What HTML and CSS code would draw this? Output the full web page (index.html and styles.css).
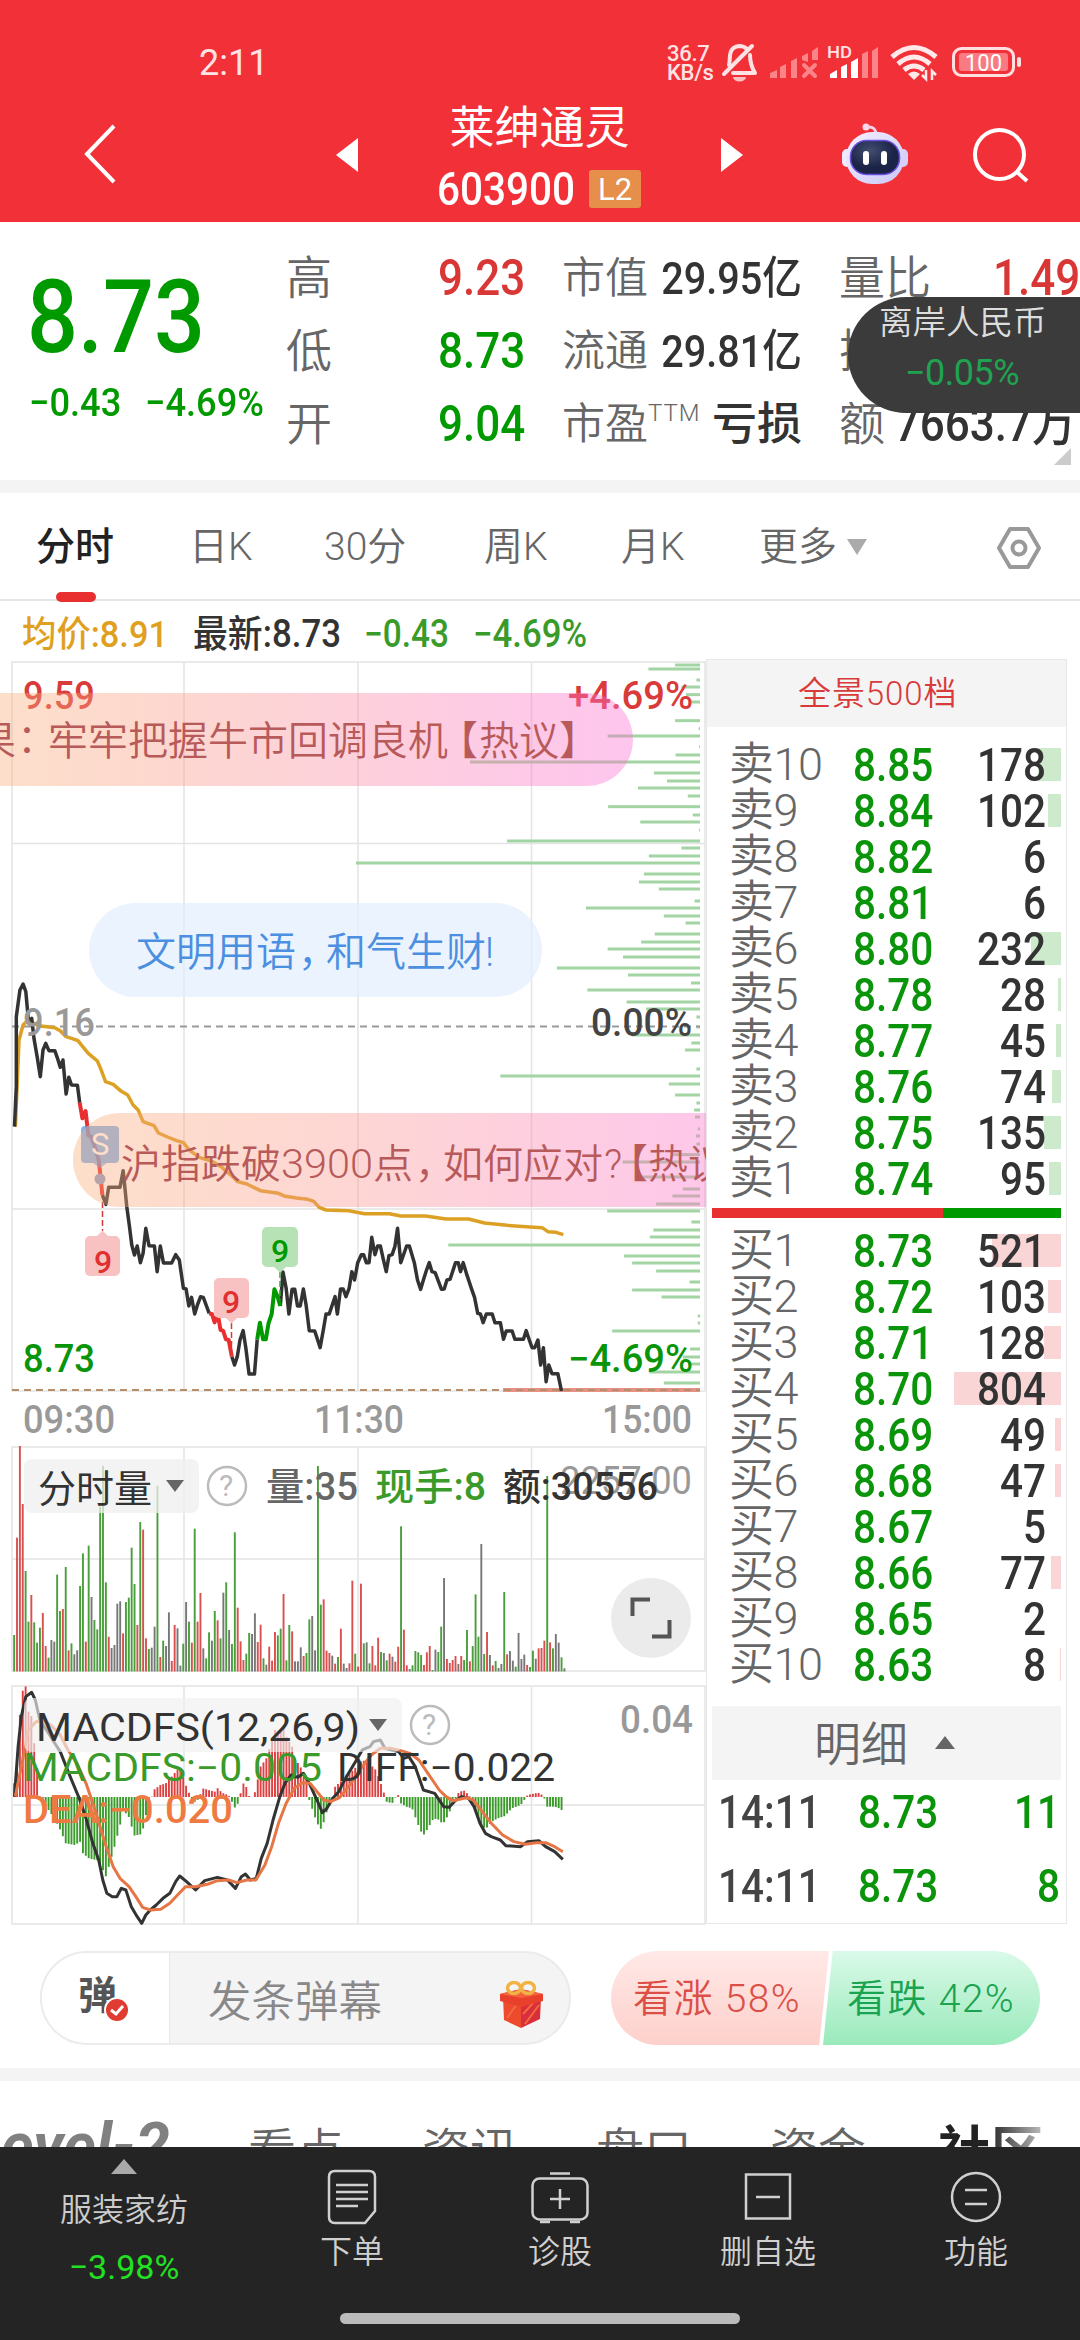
FILE: index.html
```html
<!DOCTYPE html>
<html lang="zh-CN">
<head>
    <meta charset="UTF-8">
    <meta name="viewport" content="width=device-width, initial-scale=1.0">
    <title>莱绅通灵 603900</title>
    <link rel="stylesheet" href="styles.css">
</head>
<body>
    <div class="app">
        <header class="header">
            <div class="status-bar">
                <span class="clock">2:11</span>
                <span class="net-speed">36.7<br>KB/s</span>
                <svg class="status-icons" width="362" height="50" viewBox="718 38 362 50">
                    <g fill="none" stroke="#ffe3e4" stroke-width="4" stroke-linecap="round" stroke-linejoin="round">
                        <path d="M724 74 L752 46"/>
                        <path d="M729 65 C731 58 727 48 739 46 C743 46 745 47 747 49 M750 55 C750 64 752 68 755 73 H733"/>
                    </g>
                    <path d="M733 77 h13 a6.500 4.500 0 0 1 -13 0z" fill="#ffe3e4" opacity=".8"/>
                    <g fill="#fb8489">
                        <path d="M770 78 v-5 l7 -3 v8z M780 78 v-11 l6 -3 v14z M791 78 v-17 l6 -3 v20z M802 60 v-4 l6 -3 v9z M812 60 v-9 l6 -4 v13z"/>
                        <path d="M804 65 l11 11 M815 65 l-11 11" stroke="#fb8489" stroke-width="4" stroke-linecap="round"/>
                        <path d="M862 78 v-24 l6 -3 v27z M872 78 v-27 l6 -4 v31z"/>
                    </g>
                    <path d="M830 78 v-4 l7 -4 v8z M841 78 v-11 l6 -3 v14z M851 78 v-16 l7 -4 v20z" fill="#fff"/>
                    <text x="827" y="58" class="hd" textLength="25">HD</text>
                    <g fill="none" stroke="#ffe9ea" stroke-width="5">
                        <path d="M892 57 Q914 38 936 57"/>
                        <path d="M898 64 Q914 50 930 64"/>
                        <path d="M904 70 Q914 62 924 70"/>
                    </g>
                    <path d="M908 74 q6 -5 12 0 l-6 6z" fill="#ffe9ea"/>
                    <path d="M926 70 v9 l-4 -4 M932 80 v-9 l4 4" stroke="#ffe9ea" stroke-width="2.500" fill="none"/>
                    <rect x="953.500" y="48.500" width="60" height="27" rx="8" fill="none" stroke="#ffdfe0" stroke-width="3"/>
                    <rect x="959" y="53" width="49" height="18" rx="3" fill="#f97a80"/>
                    <rect x="1017" y="57" width="4" height="10" rx="2" fill="#ffdfe0"/>
                    <text x="965" y="71" class="battery" textLength="37">100</text>
                </svg>
            </div>
            <div class="nav">
                <svg class="nav-back" width="40" height="66" viewBox="80 121 40 66"><path d="M114 126 L87 154 L114 182" fill="none" stroke="#fff" stroke-width="4"/></svg>
                <svg class="nav-prev" width="22" height="34" viewBox="0 0 22 34"><path d="M22 0 V34 L0 17z" fill="#fff"/></svg>
                <div class="nav-title">
                    <div class="stock-name">莱绅通灵</div>
                    <div class="stock-code"><span class="code">603900</span><span class="l2">L2</span></div>
                </div>
                <svg class="nav-next" width="22" height="34" viewBox="0 0 22 34"><path d="M0 0 V34 L22 17z" fill="#fff"/></svg>
                <svg class="nav-robot" width="68" height="64" viewBox="841 121 68 64">
                    <defs>
                        <linearGradient id="head" x1="0" y1="0" x2="1" y2="1"><stop offset="0" stop-color="#f6f0ff"/><stop offset="1" stop-color="#c9c8f7"/></linearGradient>
                        <radialGradient id="face" cx=".4" cy=".3"><stop offset="0" stop-color="#414e72"/><stop offset="1" stop-color="#1b2346"/></radialGradient>
                    </defs>
                    <circle cx="866" cy="127" r="3.500" fill="#fbd9e8"/>
                    <path d="M867 127 q9 -1 9 8" fill="none" stroke="#f4d2ea" stroke-width="3"/>
                    <rect x="842" y="149" width="12" height="18" rx="5" fill="#efeaff"/>
                    <rect x="896" y="149" width="12" height="18" rx="5" fill="#d6d0fa"/>
                    <rect x="846" y="132" width="58" height="52" rx="26" fill="url(#head)"/>
                    <rect x="850.500" y="140.500" width="49" height="34" rx="16" fill="url(#face)" stroke="#6a4fe0" stroke-width="1.500"/>
                    <rect x="863" y="151" width="6" height="14" rx="3" fill="#fff"/>
                    <rect x="881" y="151" width="6" height="14" rx="3" fill="#fff"/>
                </svg>
                <svg class="nav-search" width="60" height="60" viewBox="970 125 60 60"><circle cx="999.500" cy="154.500" r="24.500" fill="none" stroke="#fff" stroke-width="4"/><path d="M1017 172 L1027 181" stroke="#fff" stroke-width="4"/></svg>
            </div>
        </header>

        <section class="quote">
            <div class="price-box">
                <div class="price fit">8.73</div>
                <div class="change"><span class="fit">−0.43</span><span class="fit">−4.69%</span></div>
            </div>
            <div class="stat-col">
                <div class="stat"><span>高</span><b class="fit red">9.23</b></div>
                <div class="stat"><span>低</span><b class="fit green">8.73</b></div>
                <div class="stat"><span>开</span><b class="fit green">9.04</b></div>
            </div>
            <div class="stat-col small">
                <div class="stat"><span>市值</span><b class="fit">29.95亿</b></div>
                <div class="stat"><span>流通</span><b class="fit">29.81亿</b></div>
                <div class="stat"><span>市盈<sup>TTM</sup></span><b class="word">亏损</b></div>
            </div>
            <div class="stat-col last">
                <div class="stat"><span>量比</span><b class="fit red">1.49</b></div>
                <div class="stat"><span>换</span></div>
                <div class="stat"><span>额</span><b class="fit amount">7663.7万</b></div>
            </div>
            <div class="more-corner"></div>
            <div class="fx-toast">
                <div>离岸人民币</div>
                <div class="fx-value">−0.05%</div>
            </div>
        </section>

        <nav class="tabs">
            <div class="tab active">分时</div>
            <div class="tab">日K</div>
            <div class="tab">30分</div>
            <div class="tab">周K</div>
            <div class="tab">月K</div>
            <div class="tab">更多<i class="caret"></i></div>
            <svg width="46" height="44" viewBox="0 0 46 44"><path d="M14 3 H32 L43 22 L32 41 H14 L3 22z" fill="none" stroke="#999" stroke-width="4" stroke-linejoin="round"/><circle cx="23" cy="22" r="6.500" fill="none" stroke="#999" stroke-width="4"/></svg>
        </nav>

        <main class="main">
            <div class="charts">
                <div class="info-row">
                    <svg width="620" height="44" viewBox="0 612 620 44" class="cap">
                        <text x="22" y="647" fill="#e0a01f" textLength="146">均价:8.91</text>
                        <text x="193" y="647" fill="#333" textLength="148">最新:8.73</text>
                        <text x="364" y="647" fill="#3a9a2a" textLength="85">−0.43</text>
                        <text x="473" y="647" fill="#3a9a2a" textLength="114">−4.69%</text>
                    </svg>
                </div>

                <svg class="chart cap" width="706" height="784" viewBox="0 656 706 784">
                    <defs>
                        <linearGradient id="pill1" gradientUnits="userSpaceOnUse" x1="-60" x2="633" y1="0" y2="0"><stop offset="0" stop-color="#fab478"/><stop offset=".3" stop-color="#fa9e84"/><stop offset="1" stop-color="#fc6ed4"/></linearGradient>
                        <linearGradient id="pill3" gradientUnits="userSpaceOnUse" x1="73" x2="760" y1="0" y2="0"><stop offset="0" stop-color="#faae78"/><stop offset=".45" stop-color="#fc9696"/><stop offset="1" stop-color="#fc6ed4"/></linearGradient>
                    </defs>
                    <g class="grid">
                        <path d="M12 662 H705 V1391 H12z M184 662 V1391 M358 662 V1391 M531.500 662 V1391 M12 843.500 H705 M12 1209 H705"/>
                    </g>
                    <g id="depth"></g>
                    <path d="M12 1026.500 H700" stroke="#999" stroke-width="2" stroke-dasharray="7 5"/>
                    <path d="M503 1390 H700" stroke="#e88f88" stroke-width="4"/>
                    <path d="M12 1390 H700" stroke="#b58f6a" stroke-width="2" stroke-dasharray="7 5"/>
                    <g id="lines" transform="translate(0 960) scale(.45281 .33333)"></g>

                    <!-- sell mark and nine-turn marks -->
                    <rect x="81" y="1126" width="38" height="37" rx="4" fill="#5b9be6" fill-opacity=".75"/>
                    <path d="M93 1163 h14 l-7 5z" fill="#5b9be6" fill-opacity=".6"/>
                    <circle cx="100" cy="1179" r="5.500" fill="#8a9cc8"/>
                    <text x="91" y="1155" font-size="31" font-weight="400" fill="#fff">S</text>
                    <path d="M102.500 1202 V1231 M231.500 1323 V1356" stroke="#d03c3c" stroke-width="1.500" stroke-dasharray="6 3"/>
                    <path d="M280 1272 V1300" stroke="#4a9a4a" stroke-width="1.500" stroke-dasharray="6 3"/>
                    <path d="M90 1236 h7 l5.500 -5.500 l5.500 5.500 h7 a5 5 0 0 1 5 5 v30 a5 5 0 0 1 -5 5 h-25 a5 5 0 0 1 -5 -5 v-30 a5 5 0 0 1 5 -5z" fill="#f8c2c3"/>
                    <path d="M219 1278 h25 a5 5 0 0 1 5 5 v30 a5 5 0 0 1 -5 5 h-7 l-5.500 5.500 l-5.500 -5.500 h-7 a5 5 0 0 1 -5 -5 v-30 a5 5 0 0 1 5 -5z" fill="#f8c2c3"/>
                    <path d="M267 1227 h26 a5 5 0 0 1 5 5 v30 a5 5 0 0 1 -5 5 h-7 l-6 5.500 l-6 -5.500 h-7 a5 5 0 0 1 -5 -5 v-30 a5 5 0 0 1 5 -5z" fill="#b6e2b6"/>
                    <text x="94" y="1273" font-size="32" fill="#e03030">9</text>
                    <text x="222" y="1313" font-size="32" fill="#e03030">9</text>
                    <text x="271" y="1262" font-size="32" fill="#090">9</text>

                    <text x="23" y="709" fill="#d93a3a" textLength="72">9.59</text>
                    <text x="568" y="709" fill="#d93a3a" textLength="125">+4.69%</text>
                    <text x="23" y="1036" fill="#999" textLength="72">9.16</text>
                    <text x="591" y="1036" fill="#444" textLength="101">0.00%</text>
                    <text x="23" y="1372" fill="#0a940a" textLength="72">8.73</text>
                    <text x="568" y="1372" fill="#0a940a" textLength="125">−4.69%</text>
                    <text x="23" y="1433" fill="#999" textLength="92">09:30</text>
                    <text x="314" y="1433" fill="#999" textLength="90">11:30</text>
                    <text x="602" y="1433" fill="#999" textLength="90">15:00</text>

                    <!-- danmaku -->
                    <rect x="-90" y="693" width="723" height="93" rx="46.500" fill="url(#pill1)" fill-opacity=".4"/>
                    <rect x="89" y="903" width="453" height="94" rx="47" fill="#e3eefd" fill-opacity=".7"/>
                    <path d="M706 1113 H120 a47 47 0 0 0 0 94 H706z" fill="url(#pill3)" fill-opacity=".4"/>
                    <g class="danmaku" fill="#b85a5a">
                        <text x="-24" y="755">果</text><text x="7" y="755" class="mid">：</text>
                        <text x="48" y="755">牢牢把握牛市回调良机</text><text x="438" y="755">【</text><text x="479" y="755">热议</text><text x="559" y="755">】</text>
                        <text x="121" y="1178">沪指跌破</text><text x="281" y="1178" textLength="92">3900</text><text x="373" y="1178">点</text><text x="415" y="1178">，</text><text x="443" y="1178">如何应对</text><text x="604" y="1178">?</text><text x="608" y="1178">【</text><text x="648" y="1178">热议</text>
                    </g>
                    <g class="danmaku" fill="#4a8fe0">
                        <text x="136" y="966">文明用语</text><text x="298" y="966">，</text><text x="326" y="966">和气生财</text><text x="485" y="966">!</text>
                    </g>
                </svg>

                <svg class="chart cap" width="706" height="240" viewBox="0 1440 706 240">
                    <path class="grid" d="M12 1447 H705 V1671 H12z M184 1447 V1671 M358 1447 V1671 M531.500 1447 V1671 M12 1559 H705"/>
                    <g id="volume"></g>
                    <rect x="24" y="1459" width="175" height="54" rx="8" fill="#efefef" fill-opacity=".75"/>
                    <text x="38" y="1502" font-size="39" font-weight="400" fill="#333">分时量</text>
                    <path d="M166 1480 h18 l-9 12z" fill="#666"/>
                    <circle cx="227" cy="1486" r="19" fill="none" stroke="#bbb" stroke-width="2.500"/>
                    <text x="219" y="1496" font-size="30" font-weight="400" fill="#bbb">?</text>
                    <text x="560" y="1494" fill="#999" font-weight="400" textLength="132">2257.00</text>
                    <text x="266" y="1500" fill="#666" textLength="92">量:35</text>
                    <text x="375" y="1500" fill="#3a9a2a" textLength="111">现手:8</text>
                    <text x="503" y="1500" fill="#333" textLength="155">额:30556</text>
                    <circle cx="651" cy="1618" r="40" fill="#ebebeb"/>
                    <path d="M632.500 1616 V1599.500 H650 M669.500 1620 V1636.500 H652" fill="none" stroke="#555" stroke-width="4"/>
                </svg>

                <svg class="chart cap" width="706" height="250" viewBox="0 1680 706 250">
                    <path class="grid" d="M12 1686 H705 V1924 H12z M184 1686 V1924 M358 1686 V1924 M531.500 1686 V1924 M12 1805 H705"/>
                    <g id="macd"></g>
                    <g id="macd-lines" transform="translate(0 1430) scale(.45281 .33333)"></g>
                    <rect x="24" y="1698" width="378" height="54" rx="8" fill="#efefef" fill-opacity=".65"/>
                    <text x="36" y="1741" fill="#333" font-weight="400" textLength="324">MACDFS(12,26,9)</text>
                    <path d="M369 1719 h18 l-9 12z" fill="#666"/>
                    <circle cx="430" cy="1725" r="19" fill="none" stroke="#bbb" stroke-width="2.500"/>
                    <text x="422" y="1735" font-size="30" font-weight="400" fill="#bbb">?</text>
                    <text x="620" y="1733" fill="#999" textLength="73">0.04</text>
                    <text x="23" y="1781" fill="#3a9a2a" font-weight="400" textLength="299">MACDFS:−0.005</text>
                    <text x="337" y="1781" fill="#333" font-weight="400" textLength="218">DIFF:−0.022</text>
                    <text x="23" y="1823" fill="#ee7a42" textLength="210">DEA:−0.020</text>
                </svg>
            </div>

            <aside class="book">
                <div class="book-head">全景500档</div>
                <div class="levels" id="asks"></div>
                <div class="ratio"><i></i></div>
                <div class="levels bids" id="bids"></div>
                <div class="detail-head">明细<i class="caret up"></i></div>
                <div class="deal"><span class="fit">14:11</span><b class="fit">8.73</b><em class="fit">11</em></div>
                <div class="deal"><span class="fit">14:11</span><b class="fit">8.73</b><em class="fit">8</em></div>
            </aside>
        </main>

        <section class="interact">
            <div class="danmu-input">
                <div class="danmu-switch">弹
                    <svg width="26" height="26" viewBox="0 0 26 26"><circle cx="13" cy="13" r="12" fill="#e03c31" stroke="#fff" stroke-width="2"/><path d="M7 13 l5 4 l7 -8" fill="none" stroke="#fff" stroke-width="3"/></svg>
                </div>
                <div class="danmu-text">发条弹幕</div>
                <svg class="gift" width="46" height="50" viewBox="0 0 46 50">
                    <path d="M4 17 L22 23 L22 48 L5 40z" fill="#ee4a2e"/>
                    <path d="M22 23 L42 17 L41 39 L22 48z" fill="#d92f3c"/>
                    <path d="M26 44 L40 25 M24 34 L36 21 M8 38 L18 24" stroke="#f4683c" stroke-width="2"/>
                    <path d="M1 14 L22 9 L44 14 V21 L22 27 L1 21z" fill="#e9402c"/>
                    <path d="M1 14 L22 9 L44 14 L22 18z" fill="#f4613c"/>
                    <g fill="none" stroke="#f2b345" stroke-width="3.500"><ellipse cx="15" cy="8" rx="6.500" ry="5.500"/><ellipse cx="29" cy="8" rx="6.500" ry="5.500"/></g>
                </svg>
            </div>
            <div class="vote">
                <div class="vote-up">看涨 58%</div>
                <div class="vote-down">看跌 42%</div>
            </div>
        </section>

        <nav class="sub-tabs">
            <div class="level2">Level-2</div>
            <div>看点</div>
            <div>资讯</div>
            <div>盘口</div>
            <div>资金</div>
            <div class="current">社区</div>
        </nav>

        <footer class="footer">
            <div class="sector">
                <i class="caret up"></i>
                <div>服装家纺</div>
                <div class="sector-value">−3.98%</div>
            </div>
            <div class="action">
                <svg width="60" height="60" viewBox="0 0 60 60"><path d="M13 4 H47 Q53 4 53 10 V44 L43 56 H13 Q7 56 7 50 V10 Q7 4 13 4z"/><path d="M14 18 H46 M14 25 H46 M14 32 H46 M14 39 H36"/></svg>
                <span>下单</span>
            </div>
            <div class="action">
                <svg width="60" height="60" viewBox="0 0 60 60"><rect x="2.500" y="11.500" width="55" height="41" rx="7"/><path d="M20 6.500 H40 M30 22 V42 M20 32 H40 M10 55 H20 M40 55 H50"/></svg>
                <span>诊股</span>
            </div>
            <div class="action">
                <svg width="60" height="60" viewBox="0 0 60 60"><rect x="8" y="7.500" width="44" height="44"/><path d="M18 30 H42"/></svg>
                <span>删自选</span>
            </div>
            <div class="action">
                <svg width="60" height="60" viewBox="0 0 60 60"><circle cx="30" cy="30" r="24"/><path d="M19 23 H41 M19 37 H41"/></svg>
                <span>功能</span>
            </div>
            <div class="home-bar"></div>
        </footer>
    </div>
    <script src="script.js"></script>
</body>
</html>
```

FILE: styles.css
```css
* {
    box-sizing: border-box;
}
body {
    margin: 0;
    background: #fff;
    font-family: Roboto, "Noto Sans CJK SC", sans-serif;
    color: #333;
}
.app {
    width: 1080px;
    height: 2340px;
    overflow: hidden;
    position: relative;
    display: flex;
    flex-direction: column;
}
svg {
    display: block;
    flex: none;
}
b {
    font-weight: 500;
}
i, em {
    font-style: normal;
}
.fit {
    display: inline-block;
    transform: scaleX(0.88);
    transform-origin: left center;
    white-space: nowrap;
}
.red { color: #d93636; }
.green { color: #009900; }
.caret {
    display: inline-block;
    border: 10px solid transparent;
    border-top: 16px solid #aaa;
    border-bottom: 0;
}
.caret.up {
    border-top: 0;
    border-bottom: 13px solid #666;
}

/* header */
.header {
    height: 222px;
    background: #f23038;
    color: #fff;
}
.status-bar {
    height: 100px;
    padding: 38px 0 0 199px;
    display: flex;
}
.clock {
    width: 468px;
    font-size: 36px;
    line-height: 50px;
    color: #ffe3e4;
}
.net-speed {
    width: 51px;
    padding-top: 6px;
    font-size: 22px;
    line-height: 19px;
    font-weight: 500;
    letter-spacing: -0.3px;
    color: #ffe3e4;
}
.hd {
    font-size: 17px;
    font-weight: 500;
    fill: #ffe3e4;
}
.battery {
    font-size: 23px;
    fill: #fff;
}
.nav {
    height: 122px;
    display: flex;
    padding-left: 80px;
}
.nav-back {
    margin: 21px 216px 0 0;
}
.nav-prev, .nav-next {
    margin-top: 38px;
}
.nav-title {
    width: 363px;
}
.stock-name {
    font-size: 45px;
    line-height: 58px;
    text-align: center;
}
.stock-code {
    display: flex;
    align-items: center;
    padding-left: 79px;
    margin-top: 12px;
    height: 38px;
}
.code {
    width: 152px;
    font-size: 46px;
    line-height: 38px;
    font-weight: 500;
    transform: scaleX(0.88);
    transform-origin: left center;
}
.l2 {
    width: 52px;
    height: 38px;
    background: #e58f4a;
    border-radius: 3px;
    font-size: 31px;
    line-height: 39px;
    text-align: center;
}
.nav-robot {
    margin: 21px 0 0 98px;
}
.nav-search {
    margin: 25px 0 0 61px;
}

/* quote */
.quote {
    height: 271px;
    padding: 20px 0 0 30px;
    border-bottom: 13px solid #f4f4f4;
    position: relative;
    display: grid;
    grid-template-columns: 256px 239px 239px 240px;
}
.price-box {
    color: #009900;
}
.price {
    font-size: 102px;
    line-height: 102px;
    font-weight: 500;
    margin-top: 24px;
    margin-left: -3px;
}
.change {
    font-size: 39px;
    line-height: 40px;
    margin-top: 15px;
    margin-left: -1px;
    display: flex;
    gap: 18px;
    font-weight: 500;
}
.change .fit {
    transform: scaleX(0.93);
}
.change .fit:first-child {
    width: 98px;
}
.stat-col {
    line-height: 73px;
}
.stat-col.small {
    margin-left: 37px;
    margin-right: -38px;
}
.stat-col.last {
    margin-left: 75px;
    margin-right: -76px;
}
.stat {
    display: flex;
    justify-content: space-between;
    height: 73px;
    white-space: nowrap;
}
.stat span {
    font-size: 46px;
    font-weight: 350;
    color: #666;
}
.stat b {
    font-size: 50px;
    transform-origin: right center;
}
.small .stat span {
    font-size: 43px;
}
.small .stat b {
    font-size: 45px;
    margin-left: -20px;
}
.small .word {
    font-weight: 500;
}
.stat sup {
    font-size: 24px;
    line-height: 0;
    vertical-align: 18px;
    letter-spacing: 1px;
}
.last .amount {
    margin-left: -20px;
    margin-right: 4px;
}
.more-corner {
    position: absolute;
    left: 1054px;
    top: 226px;
    border-left: 17px solid transparent;
    border-bottom: 17px solid #ccc;
}
.fx-toast {
    position: absolute;
    left: 848px;
    top: 75px;
    width: 240px;
    height: 116px;
    padding-left: 31px;
    background: #3b3b3b;
    border-radius: 58px 0 0 58px;
    color: #ddd;
    font-size: 33.5px;
    line-height: 51px;
    font-weight: 350;
}
.fx-value {
    padding-left: 26px;
    color: #1fa350;
    font-size: 36px;
    font-weight: 400;
    letter-spacing: -0.5px;
}

/* period tabs */
.tabs {
    height: 108px;
    border-bottom: 2px solid #e6e6e6;
    padding-left: 36px;
    display: grid;
    grid-template-columns: 153px 135px 160px 137px 138px 237px auto;
    align-items: center;
    font-size: 39px;
    color: #666;
    font-weight: 350;
}
.tab {
    position: relative;
    line-height: 109px;
}
.tab.active {
    font-weight: 500;
    color: #222;
}
.tab.active::after {
    content: "";
    position: absolute;
    left: 20px;
    bottom: 0;
    width: 40px;
    height: 10px;
    border-radius: 5px;
    background: #e83030;
}
.tab .caret {
    margin-left: 10px;
    vertical-align: 5px;
}

/* charts */
.main {
    display: flex;
    height: 1329px;
}
.charts {
    width: 706px;
}
.info-row {
    height: 55px;
    padding-top: 11px;
}
.cap text {
    font-weight: 500;
    font-size: 38px;
}
.cap text[textLength="146"] { font-size: 36px; }
.cap text[font-size="30"] { font-size: 30px; font-weight: 400; }
.cap text[font-size="31"] { font-size: 31px; font-weight: 400; }
.cap text[font-size="32"] { font-size: 32px; }
.cap text[font-weight="400"] { font-weight: 400; }
.cap .danmaku text {
    font-size: 40px;
    font-weight: 350;
}
.cap .danmaku .mid {
    font-family: "Noto Sans CJK TC", sans-serif;
}
.grid {
    fill: none;
    stroke: #e4e4e4;
    stroke-width: 1.5;
}

/* order book */
.book {
    width: 361px;
    height: 1265px;
    margin-top: 58px;
    border: 1px solid #e8e8e8;
    padding: 0 5px;
}
.book-head {
    margin: 0 -5px;
    height: 67px;
    background: #f4f4f4;
    color: #d93a3a;
    font-size: 33px;
    line-height: 68px;
    padding-left: 91px;
    font-weight: 350;
    letter-spacing: 0.9px;
}
.levels {
    padding-top: 15px;
    height: 481px;
}
.level {
    height: 46px;
    line-height: 46px;
    font-size: 46px;
    position: relative;
    display: grid;
    grid-template-columns: 124px 96px 97px;
    padding-left: 17px;
    font-weight: 500;
    white-space: nowrap;
}
.level span {
    font-size: 45px;
    font-weight: 350;
    letter-spacing: -0.5px;
    color: #666;
}
.level b {
    color: #0a940a;
}
.level em {
    text-align: right;
    transform-origin: right center;
    position: relative;
}
.level i {
    position: absolute;
    right: 0;
    top: 6px;
    height: 33px;
    background: #cdeacd;
}
.bids .level i {
    background: #f9d5d5;
}
.ratio {
    height: 10px;
    background: #e83030;
}
.ratio i {
    display: block;
    height: 10px;
    width: 118px;
    margin-left: auto;
    background: #009900;
}
.bids {
    padding-top: 10px;
    height: 488px;
}
.detail-head {
    height: 74px;
    background: #f4f4f4;
    color: #666;
    font-size: 47px;
    line-height: 77px;
    padding-left: 102px;
    font-weight: 350;
}
.detail-head .caret {
    margin-left: 27px;
    vertical-align: 12px;
}
.deal {
    height: 74px;
    line-height: 65px;
    font-size: 46px;
    display: grid;
    grid-template-columns: 140px 100px 102px;
    padding-left: 6px;
    font-weight: 500;
    color: #0a940a;
    white-space: nowrap;
}
.deal span {
    color: #444;
}
.deal em {
    text-align: right;
    transform-origin: right center;
}

/* danmaku input and vote */
.interact {
    height: 151px;
    padding: 21px 40px 0;
    border-bottom: 13px solid #f4f4f4;
    display: flex;
    justify-content: space-between;
}
.danmu-input {
    width: 531px;
    height: 94px;
    border: 2px solid #ebebeb;
    border-radius: 47px;
    background: #f4f4f4;
    overflow: hidden;
    display: flex;
    align-items: center;
}
.danmu-switch {
    position: relative;
    width: 128px;
    height: 100%;
    padding-left: 36px;
    background: #fff;
    border-right: 1px solid #e8e8e8;
    font-size: 39px;
    font-weight: 700;
    line-height: 86px;
    color: #555;
}
.danmu-switch svg {
    position: absolute;
    left: 62px;
    top: 44px;
}
.danmu-text {
    width: 329px;
    padding-left: 38px;
    font-size: 43.5px;
    font-weight: 350;
    color: #888;
}
.gift {
    margin-top: 14px;
}
.vote {
    width: 429px;
    height: 94px;
    border-radius: 47px;
    overflow: hidden;
    display: flex;
    font-size: 39px;
    line-height: 96px;
    font-weight: 350;
    white-space: nowrap;
    letter-spacing: 1.4px;
}
.vote-up {
    width: 218px;
    padding-left: 22px;
    color: #dc4f47;
    background: linear-gradient(#ffe9e7, #fdd0cb);
    clip-path: polygon(0 0, 100% 0, 95.500% 100%, 0 100%);
}
.vote-down {
    width: 217px;
    margin-left: -6px;
    padding-left: 24px;
    color: #1aa350;
    background: linear-gradient(#dafae9, #9aeabb);
    clip-path: polygon(4.500% 0, 100% 0, 100% 100%, 0 100%);
}

/* sub tabs */
.sub-tabs {
    height: 66px;
    display: flex;
    font-size: 48px;
    line-height: 142px;
    font-weight: 350;
    color: #666;
    overflow: hidden;
}
.sub-tabs div {
    width: 174px;
    flex: none;
}
.sub-tabs .level2 {
    width: 248px;
    padding-right: 78px;
    display: flex;
    justify-content: flex-end;
    white-space: nowrap;
    font-size: 62px;
    line-height: 130px;
    font-style: italic;
    font-weight: 700;
    color: #808080;
}
.sub-tabs .current {
    font-size: 53px;
    font-weight: 700;
    margin-left: -6px;
    background: linear-gradient(90deg, #222 50px, #ccc 110px);
    -webkit-background-clip: text;
    background-clip: text;
    color: transparent;
}

/* footer */
.footer {
    height: 193px;
    background: #242424;
    color: #ccc;
    position: relative;
    display: flex;
    font-size: 32px;
    font-weight: 350;
}
.sector {
    width: 248px;
    text-align: center;
    line-height: 40px;
}
.sector .caret {
    display: block;
    width: 26px;
    margin: 12px auto 16px;
    border-width: 0 13px 15px;
    border-bottom-color: #aaa;
}
.sector-value {
    margin-top: 17px;
    color: #22e022;
    font-size: 34px;
    font-weight: 400;
}
.action {
    width: 208px;
    display: flex;
    flex-direction: column;
    align-items: center;
    padding-top: 20px;
}
.action svg {
    fill: none;
    stroke: #d0d0d0;
    stroke-width: 2.5;
}
.action span {
    margin-top: 5px;
    line-height: 40px;
    color: #d0d0d0;
}
.home-bar {
    position: absolute;
    left: 340px;
    top: 166px;
    width: 400px;
    height: 11px;
    border-radius: 6px;
    background: #bbb;
}
```

FILE: script.js
```js
const NS = "http://www.w3.org/2000/svg";

function add(parent, tag, attrs) {
    const el = document.createElementNS(NS, tag);
    for (const k in attrs) el.setAttribute(k, attrs[k]);
    parent.appendChild(el);
}

// stretch every fixed-length label to its box
document.querySelectorAll("text[textLength]").forEach(t => t.setAttribute("lengthAdjust", "spacingAndGlyphs"));

// order book: label, price, volume, bar width
const asks = [["卖10","8.85",178,23],["卖9","8.84",102,13],["卖8","8.82",6,0],["卖7","8.81",6,0],["卖6","8.80",232,30],["卖5","8.78",28,3],["卖4","8.77",45,5],["卖3","8.76",74,9],["卖2","8.75",135,17],["卖1","8.74",95,12]];
const bids = [["买1","8.73",521,69],["买2","8.72",103,13],["买3","8.71",128,17],["买4","8.70",804,107],["买5","8.69",49,6],["买6","8.68",47,6],["买7","8.67",5,0],["买8","8.66",77,10],["买9","8.65",2,0],["买10","8.63",8,1]];

function fillBook(id, rows) {
    document.getElementById(id).innerHTML = rows.map(r =>
        `<div class="level"><i style="width:${r[3]}px"></i><span>${r[0]}</span><b class="fit">${r[1]}</b><em class="fit">${r[2]}</em></div>`
    ).join("");
}
fillBook("asks", asks);
fillBook("bids", bids);

// price distribution: y, left edge
const depthTop = "45:1491 57:1432 90:1538 111:1505 134:1515 156:1525 212:1491 236:1543 258:1342 290:1544 315:1492 336:1038 369:1444 393:1473 414:1409 438:1519 470:1343 495:1530 516:1414 540:1544 573:1120 594:1505 618:1433 639:786 672:1422 696:1411 717:1455 753:1534 774:1294 798:1466 819:1514 852:1446 876:1416 897:1342 921:1376 954:1230 975:1387 999:1526 1020:1297 1056:1384 1077:1427 1101:1538 1131:1538 1155:1395 1179:1527 1200:1513 1257:1538 1278:1105 1302:1477 1335:1491 1359:1538 1380:1533 1401:1535 1437:1541 1458:1537 1482:1538 1514:1487 1536:1375 1581:1420 1617:1508 1638:1485 1662:1449 1683:1341 1716:1527 1740:1443 1761:1435 1785:990 1818:1378 1839:1396 1863:1449 1896:1523 1920:1396 1941:1461 1998:1541 2019:1541 2043:1352 2097:1524 2121:1508 2142:1520 2166:1434 2199:1466";
const depth = document.getElementById("depth");
depthTop.split(" ").forEach(s => {
    const [y, x] = s.split(":").map(Number);
    add(depth, "rect", { x: x / 2.2085, y: 650 + y / 3 - 1.5, width: 700 - x / 2.2085, height: 3, fill: "#a3d4a3" });
});

function line(parent, points, color, width) {
    add(parent, "polyline", { points, fill: "none", stroke: color, "stroke-width": width, "stroke-linejoin": "round", "vector-effect": "non-scaling-stroke" });
}

const lines = document.getElementById("lines");
line(lines, "34,500 42,240 51,195 60,183 70,188 90,198 108,201 121,203 133,212 146,230 158,235 172,242 184,262 195,280 215,303 222,325 233,365 250,373 268,394 282,405 294,435 305,450 316,485 340,497 350,519 370,531 390,542 405,548 418,570 440,592 470,605 490,622 500,635 510,645 525,665 545,672 575,692 615,700 630,709 655,714 680,718 693,724 705,742 720,750 770,752 805,761 860,761 885,768 940,768 985,777 1035,777 1070,789 1120,796 1170,801 1197,803 1210,815 1228,817 1244,824", "#dca024", 3.5);
line(lines, "32,500 36,380 36,170 44,90 51,72 57,95 63,185 70,175 75,235 82,290 89,350 95,270 101,250 108,272 121,272 127,295 133,322 139,300 146,402 152,352 158,375 171,376 176,428", "#333", 3.5);
line(lines, "226,705 234,733 240,682 265,682 272,632 280,740 286,800 291,855 297,885 303,858 310,908 316,880 322,805 329,857 341,858 347,935 354,858 361,909 379,909 388,884 396,900 405,985 411,987 417,1038 423,1012 430,1062 436,1035 443,1010 449,1012 462,1060", "#333", 3.5);
line(lines, "512,1190 518,1215 524,1190 530,1140 537,1112 543,1165 550,1242 562,1242 568,1138", "#333", 3.5);
line(lines, "619,1038 625,936 632,985 638,1062 645,988 651,988 657,1038 663,1038 670,987 676,1035 683,1112 695,1113 701,1138 707,1163 714,1110 720,1062 727,1062 740,1010 745,1062 752,987 758,987 764,1010 771,985 777,935 783,960 790,908 798,884 803,884 809,908 815,908 821,832 828,884 834,858 840,858 846,895 853,935 859,887 866,884 872,860 878,805 885,908 891,885 898,858 904,858 915,908 922,960 929,988 935,960 942,930 948,908 954,935 961,938 975,988 981,987 987,960 994,958 1006,908 1012,908 1017,935 1023,908 1030,940 1041,985 1048,1012 1055,1060 1061,1062 1067,1088 1074,1062 1087,1062 1093,1088 1105,1088 1112,1138 1118,1113 1131,1113 1137,1138 1156,1138 1162,1112 1169,1140 1175,1163 1181,1163 1188,1140 1194,1215 1200,1163 1206,1265 1212,1215 1219,1241 1232,1241 1240,1293", "#333", 3.5);
line(lines, "176,428 182,475 189,453 195,525 201,530 208,555 218,600 222,650 226,705", "#e83030", 4);
line(lines, "462,1060 468,1062 474,1087 481,1062 487,1110 493,1113 499,1138 505,1140 512,1190", "#e83030", 4);
line(lines, "568,1138 574,1088 581,1138 587,1138 593,1090 600,1062 606,988 613,1010 619,1038", "#009900", 4);

// minute volume, one bar per minute: color and top
const colors = { r: "#d9504f", g: "#4a9e3c", k: "#777" };
const vol = "g615 r323 r48 r222 g423 g575 r495 g577 g638 g593 r549 r648 g683 k630 k635 g434 g543 r537 g411 r661 g640 k673 k661 g468 g370 r635 g347 k501 g570 g598 g230 g107 g457 r620 k654 k645 k521 k514 r610 g516 g503 g353 g462 r585 g276 r299 r625 g657 k653 k590 g167 r681 g632 k648 k547 r693 r585 k595 k707 g641 k516 g575 r638 g296 r575 r489 k655 g685 g607 k632 g543 r571 g625 k488 g457 k600 g642 g307 r533 r634 r690 g671 g609 k612 k550 r636 r584 g685 k704 r650 r692 r606 g616 g596 r492 g691 g585 r604 k694 k694 k652 r678 g669 g568 k558 k661 g108 g524 r508 r662 r669 k677 r701 g681 r596 k701 k714 r700 r452 g671 r710 r461 g640 k637 g700 r648 r706 r623 g666 k669 g691 r671 k680 r695 r650 g289 r599 r706 k717 g706 g663 g667 g675 r705 r667 r648 g720 k659 g666 g590 k444 r687 r699 r690 r678 k702 r678 g690 g600 r694 g648 g493 g620 k342 g672 r606 k675 r706 g693 k714 k702 g486 r673 k663 k692 g710 k609 k687 k674 r705 g711 g662 k686 r655 r654 r632 g138 r637 g655 k612 k638 g682 k715";
const volume = document.getElementById("volume");
vol.split(" ").forEach((v, i) => {
    const top = 1430 + Number(v.slice(1)) / 3;
    add(volume, "rect", { x: 13.2 + i * 2.866, y: top, width: 1.9, height: 1671.5 - top, fill: colors[v[0]] });
});

// MACD histogram key points, interpolated between minutes
const hist = "31,1060 38,965 44,848 50,782 57,768 63,850 70,860 76,950 82,1020 88,1100 95,1120 107,1140 120,1165 133,1200 145,1240 165,1245 177,1235 183,1270 196,1285 218,1292 227,1320 234,1340 240,1310 253,1248 265,1185 272,1140 284,1160 291,1192 297,1217 310,1213 316,1195 323,1150 332,1110 341,1078 354,1065 366,1060 379,1040 392,1018 398,1015 404,1040 411,1068 420,1098 430,1116 436,1110 449,1075 460,1080 474,1085 480,1074 490,1088 505,1096 512,1115 518,1133 524,1125 530,1095 537,1060 543,1068 550,1098 560,1103 568,1055 575,1010 588,985 595,955 607,900 619,905 626,890 632,920 645,950 651,985 663,1010 676,1040 683,1110 695,1160 707,1200 714,1180 720,1150 733,1110 740,1070 752,1055 765,1035 780,1020 800,990 815,1000 830,1020 846,1080 853,1115 866,1120 878,1090 885,1120 897,1130 910,1135 922,1180 934,1218 945,1195 955,1170 965,1165 978,1182 990,1155 1000,1120 1011,1090 1023,1080 1036,1095 1048,1130 1061,1190 1074,1195 1086,1175 1099,1165 1115,1158 1130,1135 1150,1125 1165,1095 1175,1092 1188,1088 1200,1097 1208,1130 1225,1130 1235,1135 1245,1145".split(" ").map(p => p.split(",").map(Number));
const macd = document.getElementById("macd");
let k = 0;
for (let i = 0; i < 192; i++) {
    const x = 31 + i * 6.33;
    while (k < hist.length - 2 && hist[k + 1][0] < x) k++;
    const [a, b] = [hist[k], hist[k + 1]];
    const y = a[1] + (b[1] - a[1]) * (x - a[0]) / (b[0] - a[0]);
    const up = y < 1101;
    add(macd, "rect", { x: 13.2 + i * 2.866, y: 1430 + (up ? y : 1101) / 3, width: 1.9, height: Math.abs(y - 1101) / 3, fill: up ? "#dc4040" : "#3a9a2a" });
}

const macdLines = document.getElementById("macd-lines");
line(macdLines, "32,1100 40,950 47,860 57,800 70,787 78,810 88,870 105,905 121,940 133,965 155,1040 175,1105 190,1165 205,1240 218,1290 227,1350 236,1390 248,1400 258,1400 268,1375 278,1380 290,1430 303,1460 313,1480 322,1455 332,1440 345,1425 360,1405 375,1390 388,1355 397,1338 412,1355 432,1380 452,1352 480,1342 502,1350 520,1375 533,1340 542,1332 553,1350 566,1345 577,1285 590,1240 603,1170 618,1100 630,1058 643,1035 658,1042 670,1030 683,1060 700,1110 712,1148 722,1135 735,1105 748,1085 765,1040 785,995 800,960 817,950 825,935 840,930 850,955 865,960 880,965 892,985 903,980 917,1010 935,1080 960,1090 980,1130 992,1132 1005,1112 1020,1100 1035,1105 1047,1130 1060,1180 1072,1210 1085,1220 1105,1230 1117,1247 1150,1250 1165,1235 1190,1232 1205,1250 1225,1265 1243,1288", "#333", 3);
line(macdLines, "34,1098 50,990 62,900 80,875 95,872 112,885 133,915 150,960 170,1000 190,1060 210,1140 232,1240 250,1310 265,1345 285,1370 300,1400 315,1432 332,1440 355,1438 375,1420 392,1395 410,1370 432,1370 460,1362 480,1352 505,1350 523,1358 545,1350 565,1350 585,1305 600,1250 615,1180 632,1120 650,1075 668,1058 685,1060 700,1085 715,1110 730,1115 750,1103 775,1060 800,1010 820,975 840,955 865,955 885,962 905,970 925,990 945,1030 970,1080 985,1100 1000,1112 1030,1103 1045,1110 1065,1145 1085,1180 1110,1215 1135,1235 1160,1243 1185,1238 1205,1238 1225,1250 1243,1265", "#e67645", 3);
```
